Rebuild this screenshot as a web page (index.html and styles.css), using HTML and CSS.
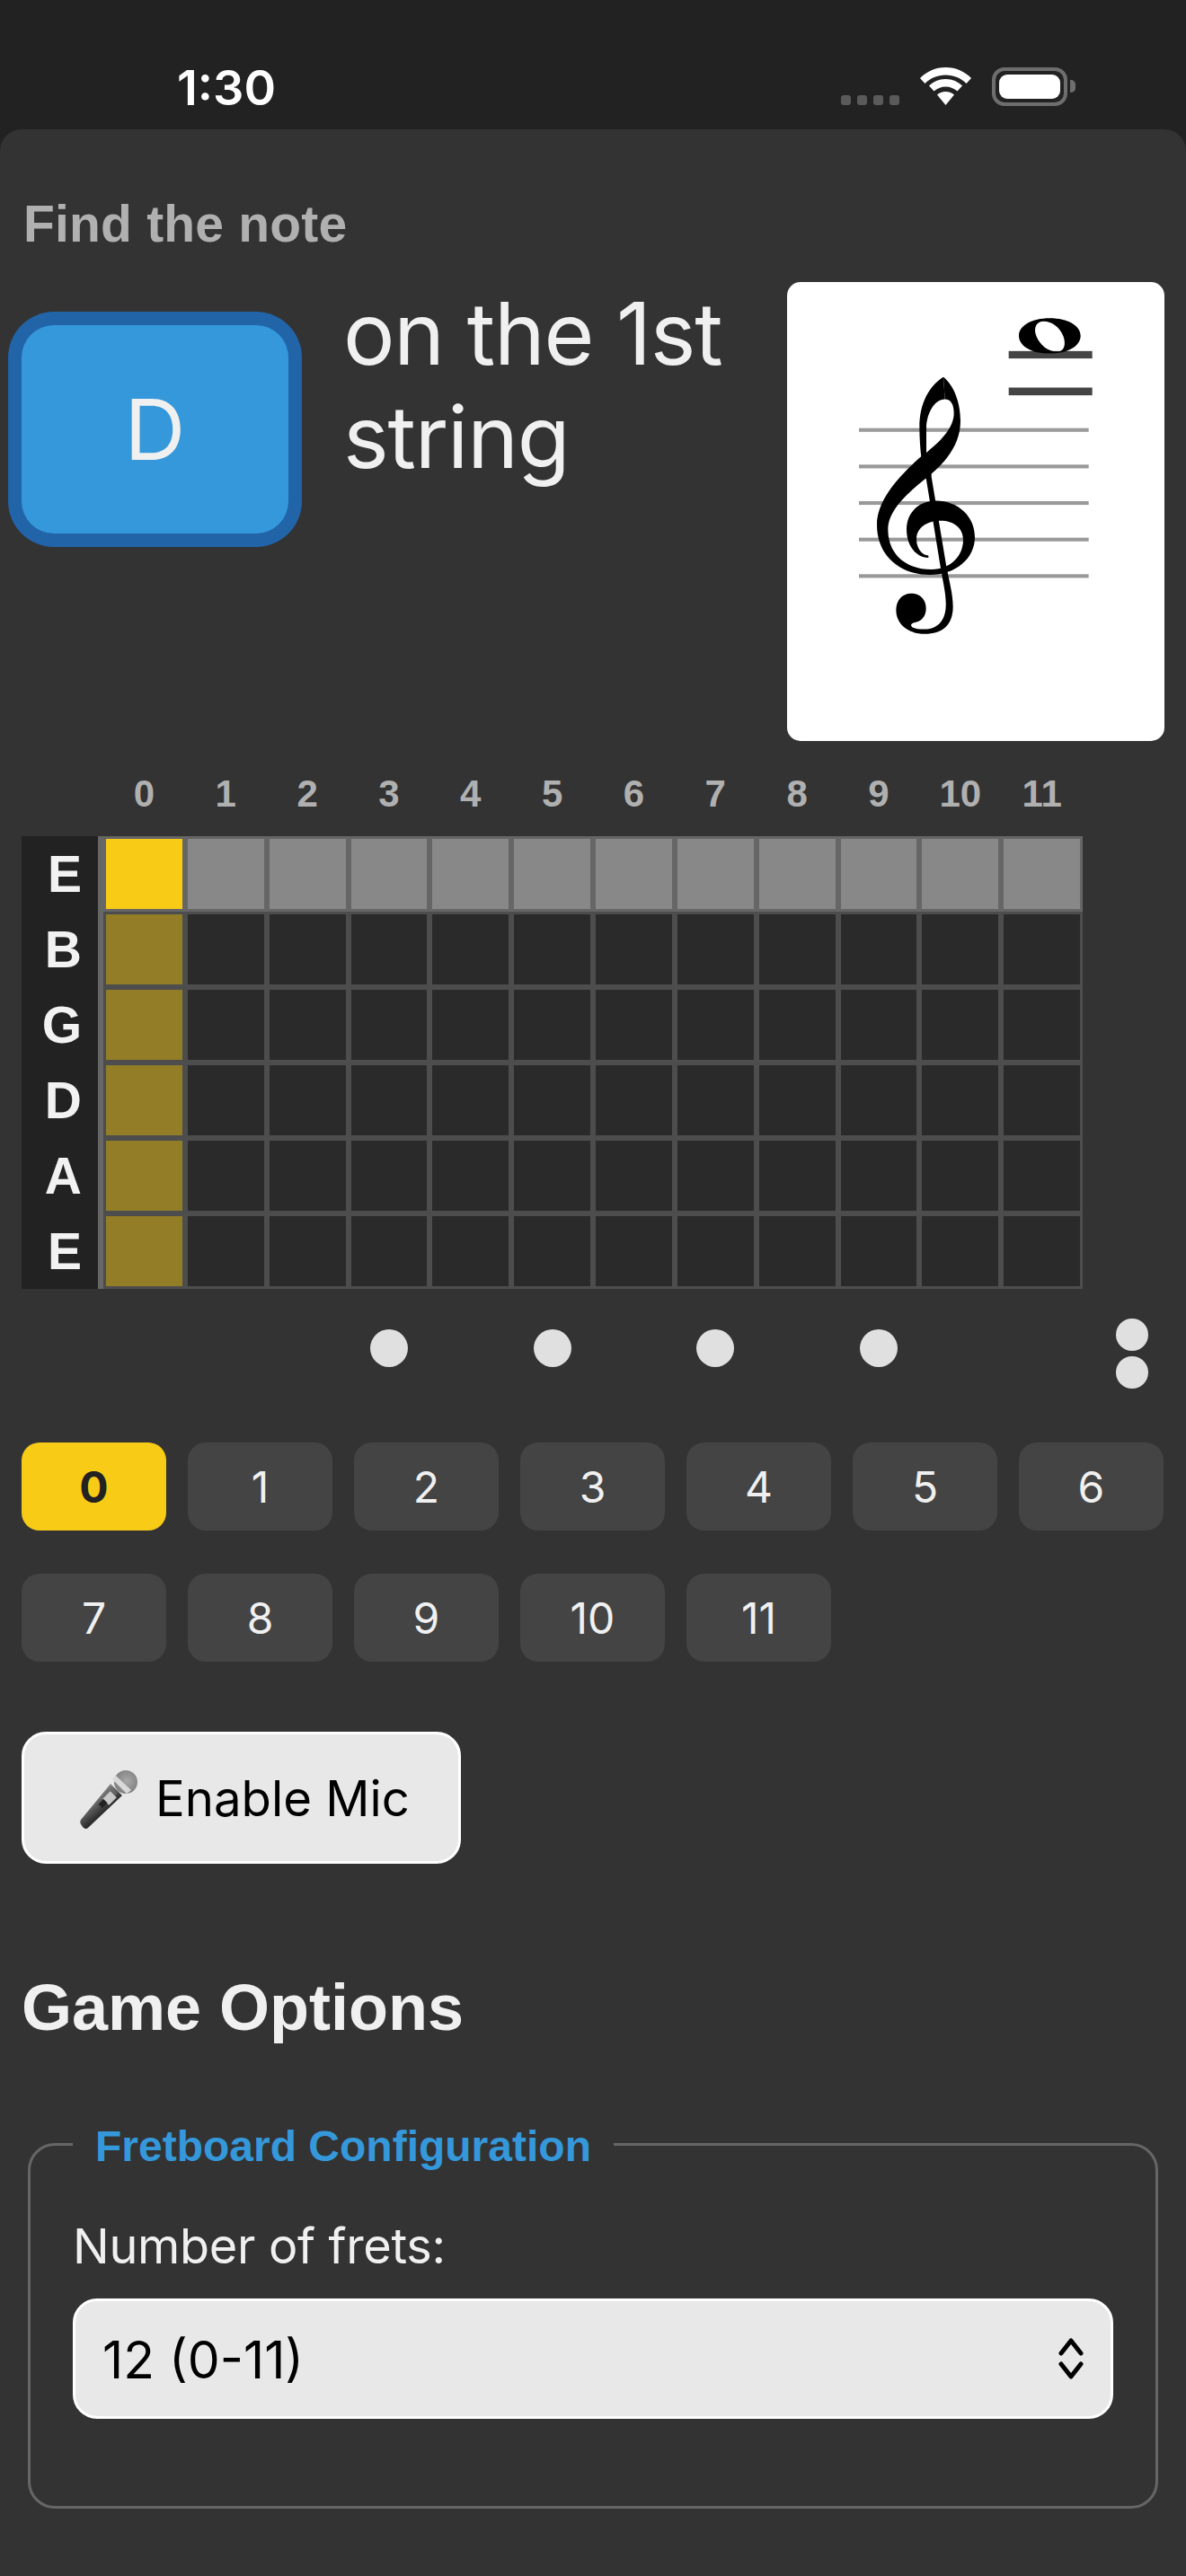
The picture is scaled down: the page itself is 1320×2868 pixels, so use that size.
FILE: index.html
```html
<!DOCTYPE html>
<html>

<head>
    <meta charset="utf-8">
    <title>Find the note</title>
    <link rel="stylesheet" href="styles.css">
</head>

<body>
    <div class="status-bar">
        <span class="time">1:30</span>
        <div class="status-icons">
            <div class="signal"><i></i><i></i><i></i><i></i></div>
            <svg class="wifi" width="57" height="42" viewBox="0 0 57 42">
                <path d="M28.5 0C17 0 7.5 4.5 0 12L5.5 18C11.5 12 19.5 8.5 28.5 8.5C37.5 8.5 45.5 12 51.5 18L57 12C49.5 4.5 40 0 28.5 0Z" />
                <path d="M28.5 13C21 13 14.5 16 10 20.5L15.5 26.5C19 23.5 23.5 21.5 28.5 21.5C33.5 21.5 38 23.5 41.5 26.5L47 20.5C42.5 16 36 13 28.5 13Z" />
                <path d="M28.5 27C24.5 27 21.5 28.5 19 30.5L28.5 42L38 30.5C35.5 28.5 32.5 27 28.5 27Z" />
            </svg>
            <div class="battery"><div class="battery-fill"></div></div>
            <div class="battery-nub"></div>
        </div>
    </div>

    <div class="card">
        <div class="prompt-label">Find the note</div>

        <div class="prompt">
            <div class="note-box">D</div>
            <div class="prompt-text">on the 1st string</div>
            <div class="sheet">
                <svg class="staff" viewBox="48 41 1260 1483" preserveAspectRatio="none">
                    <g fill="#999">
                        <rect x="288" y="513" width="767" height="12" />
                        <rect x="288" y="631" width="767" height="12" />
                        <rect x="288" y="749" width="767" height="12" />
                        <rect x="288" y="867" width="767" height="12" />
                        <rect x="288" y="985" width="767" height="12" />
                    </g>
                    <g fill="#444">
                        <rect x="788" y="264" width="279" height="24" />
                        <rect x="788" y="382" width="279" height="25" />
                    </g>
                    <!-- clef -->
                    <path d="M570 348C605 375 627 430 627 490C627 555 590 612 528 662C470 708 385 770 385 840C385 925 450 970 530 970C595 970 636 925 636 875C636 835 605 812 560 812C515 812 480 835 480 872C480 900 498 925 520 925L520 932C475 930 447 890 447 840C447 785 490 748 545 748C620 748 675 800 675 865C675 935 610 987 525 987C425 987 348 925 348 825C348 745 420 670 497 603L516 590C565 552 605 510 605 465C605 437 595 420 575 420Z" />
                    <path d="M570 348C525 375 490 430 490 510C490 560 495 600 500 640L513 680L560 960C568 1010 580 1050 578 1090C576 1135 550 1163 505 1163C485 1163 465 1160 462 1150C462 1145 470 1142 478 1140C500 1135 512 1118 512 1095C512 1065 490 1047 462 1047C432 1047 412 1070 412 1102C412 1145 450 1178 508 1178C565 1178 602 1150 602 1090C602 1050 590 1010 580 960L530 670L530 640L513 590C513 560 513 540 513 510C515 465 540 420 575 420Z" />
                    <!-- whole note -->
                    <path fill-rule="evenodd" d="M925 158C985 158 1028 182 1028 215C1028 248 985 272 925 272C865 272 822 248 822 215C822 182 865 158 925 158ZM905 168C880 168 870 190 880 215C892 245 920 266 950 266C975 266 980 240 970 215C958 187 932 168 905 168Z" />
                </svg>
            </div>
        </div>

        <div class="fret-numbers">
            <span>0</span><span>1</span><span>2</span><span>3</span><span>4</span><span>5</span>
            <span>6</span><span>7</span><span>8</span><span>9</span><span>10</span><span>11</span>
        </div>

        <div class="fretboard">
            <div class="string-labels">
                <span>E</span><span>B</span><span>G</span><span>D</span><span>A</span><span>E</span>
            </div>
            <div class="frets">
                <div class="cell current"></div>
                <div class="cell target"></div><div class="cell target"></div><div class="cell target"></div>
                <div class="cell target"></div><div class="cell target"></div><div class="cell target"></div>
                <div class="cell target"></div><div class="cell target"></div><div class="cell target"></div>
                <div class="cell target"></div><div class="cell target"></div>

                <div class="cell open"></div>
                <div class="cell"></div><div class="cell"></div><div class="cell"></div><div class="cell"></div><div class="cell"></div>
                <div class="cell"></div><div class="cell"></div><div class="cell"></div><div class="cell"></div><div class="cell"></div><div class="cell"></div>

                <div class="cell open"></div>
                <div class="cell"></div><div class="cell"></div><div class="cell"></div><div class="cell"></div><div class="cell"></div>
                <div class="cell"></div><div class="cell"></div><div class="cell"></div><div class="cell"></div><div class="cell"></div><div class="cell"></div>

                <div class="cell open"></div>
                <div class="cell"></div><div class="cell"></div><div class="cell"></div><div class="cell"></div><div class="cell"></div>
                <div class="cell"></div><div class="cell"></div><div class="cell"></div><div class="cell"></div><div class="cell"></div><div class="cell"></div>

                <div class="cell open"></div>
                <div class="cell"></div><div class="cell"></div><div class="cell"></div><div class="cell"></div><div class="cell"></div>
                <div class="cell"></div><div class="cell"></div><div class="cell"></div><div class="cell"></div><div class="cell"></div><div class="cell"></div>

                <div class="cell open"></div>
                <div class="cell"></div><div class="cell"></div><div class="cell"></div><div class="cell"></div><div class="cell"></div>
                <div class="cell"></div><div class="cell"></div><div class="cell"></div><div class="cell"></div><div class="cell"></div><div class="cell"></div>
            </div>
        </div>

        <div class="inlays">
            <div></div><div></div><div></div>
            <div class="inlay"></div>
            <div></div>
            <div class="inlay"></div>
            <div></div>
            <div class="inlay"></div>
            <div></div>
            <div class="inlay"></div>
            <div></div><div></div>
            <div class="inlay-double"><i></i><i></i></div>
        </div>

        <div class="answers">
            <button class="answer active">0</button>
            <button class="answer">1</button>
            <button class="answer">2</button>
            <button class="answer">3</button>
            <button class="answer">4</button>
            <button class="answer">5</button>
            <button class="answer">6</button>
            <button class="answer">7</button>
            <button class="answer">8</button>
            <button class="answer">9</button>
            <button class="answer">10</button>
            <button class="answer">11</button>
        </div>

        <button class="mic-btn">
            <svg class="mic-icon" width="80" height="80" viewBox="0 0 80 80">
                <defs>
                    <linearGradient id="micBody" x1="24" y1="40" x2="36" y2="54" gradientUnits="userSpaceOnUse">
                        <stop offset="0" stop-color="#8a8a8a" />
                        <stop offset="0.45" stop-color="#5c5c5c" />
                        <stop offset="1" stop-color="#2f2f2f" />
                    </linearGradient>
                    <radialGradient id="micHead" cx="0.55" cy="0.45" r="0.6">
                        <stop offset="0" stop-color="#a8a8a8" />
                        <stop offset="1" stop-color="#7c7c7c" />
                    </radialGradient>
                </defs>
                <path d="M43 24L56 37L18 73C16 75 14 74 12 72L10 69C9 67 9 66 10 64Z" fill="url(#micBody)" />
                <circle cx="60" cy="22" r="13" fill="url(#micHead)" />
                <path d="M45 19L49 15L66 31L61 35Z" fill="#d9d9d9" />
                <path d="M38 33L44 27L51 34L44 43L38 38Z" fill="#6e6e6e" opacity="0.6" />
                <rect x="-5" y="-6" width="10" height="12" transform="translate(42 40) rotate(45)" fill="#c9c9c9" />
                <rect x="-3" y="-4" width="6" height="8" transform="translate(34.5 46) rotate(45)" fill="#222" />
            </svg>
            <span>Enable Mic</span>
        </button>

        <h2 class="options-title">Game Options</h2>

        <fieldset class="options-group">
            <legend>Fretboard Configuration</legend>
            <label class="field-label">Number of frets:</label>
            <div class="select">
                <span>12 (0-11)</span>
                <svg width="32" height="46" viewBox="0 0 32 46" fill="none" stroke="#000" stroke-width="5" stroke-linecap="round" stroke-linejoin="round">
                    <polyline points="5,17 16,3 27,17" />
                    <polyline points="5,29 16,43 27,29" />
                </svg>
            </div>
        </fieldset>
    </div>
</body>

</html>
```

FILE: styles.css
```css
* {
    box-sizing: border-box;
}

body {
    margin: 0;
    height: 2868px;
    overflow: hidden;
    display: flex;
    flex-direction: column;
    background: #222222;
    color: #f0f0f0;
    font-family: "Inter", "Liberation Sans", sans-serif;
}

/* status bar */
.status-bar {
    height: 144px;
    flex: none;
    display: flex;
    justify-content: space-between;
    align-items: flex-start;
    padding: 65px 123px 0 197px;
}

.time {
    font-size: 54px;
    font-weight: 600;
    line-height: 66px;
    color: #fff;
}

.status-icons {
    display: flex;
    align-items: flex-end;
    padding-top: 10px;
    height: 53px;
}

.signal {
    display: flex;
    gap: 7px;
    margin-right: 23px;
    margin-bottom: 1px;
}

.signal i {
    width: 11px;
    height: 11px;
    border-radius: 3px;
    background: #5a5a5a;
}

.wifi {
    fill: #fff;
    margin-right: 23px;
    margin-bottom: 1px;
}

.battery {
    width: 84px;
    height: 43px;
    padding: 4px;
    border: 4px solid #6e6e6e;
    border-radius: 14px;
}

.battery-fill {
    height: 100%;
    background: #fff;
    border-radius: 9px;
}

.battery-nub {
    width: 6px;
    height: 14px;
    margin: 0 0 15px 3px;
    background: #6e6e6e;
    border-radius: 0 5px 5px 0;
}

/* card */
.card {
    flex: 1;
    background: #333333;
    border-radius: 24px 24px 0 0;
    padding: 72px 24px 0;
}

.prompt-label {
    padding-left: 2px;
    font-family: "Liberation Sans", sans-serif;
    font-size: 57px;
    font-weight: 700;
    letter-spacing: 0.2px;
    line-height: 66px;
    color: #b0b0b0;
}

.prompt {
    display: flex;
    align-items: flex-start;
    margin-top: 32px;
}

.note-box {
    width: 297px;
    height: 232px;
    margin-top: 48px;
    display: flex;
    align-items: center;
    justify-content: center;
    flex: none;
    background: #3498db;
    border-radius: 36px;
    box-shadow: 0 0 0 15px #2264a8;
    font-size: 94px;
    font-weight: 400;
}

.prompt-text {
    width: 480px;
    margin: 0 0 0 61px;
    font-size: 96px;
    font-weight: 400;
    letter-spacing: -1.2px;
    line-height: 115px;
}

.sheet {
    width: 420px;
    height: 511px;
    margin-left: auto;
    flex: none;
    background: #fff;
    border-radius: 15px;
}

.staff {
    display: block;
    width: 100%;
    height: 100%;
}

/* fretboard */
.fret-numbers {
    display: grid;
    grid-template-columns: repeat(12, 1fr);
    width: 1090px;
    margin: 34px 0 0 91px;
    height: 48px;
    font-family: "Liberation Sans", sans-serif;
    font-size: 42px;
    font-weight: 700;
    line-height: 50px;
    text-align: center;
    color: #b0b0b0;
}

.fretboard {
    display: flex;
    margin-top: 24px;
}

.string-labels {
    width: 85px;
    flex: none;
    display: flex;
    flex-direction: column;
    background: #222222;
    font-family: "Liberation Sans", sans-serif;
    font-size: 57px;
    font-weight: 700;
    color: #f2f2f2;
}

.string-labels span {
    height: 84px;
    line-height: 84px;
    text-align: right;
    padding-right: 18px;
}

.frets {
    width: 1096px;
    display: grid;
    grid-template-columns: repeat(12, 1fr);
    grid-auto-rows: 84px;
    border-left: 6px solid #666666;
}

.cell {
    border: 3px solid #4d4d4d;
    background: #2a2a2a;
}

.cell.open {
    background: #937d27;
}

.cell.target {
    border-color: #666666;
    background: #888888;
}

.cell.current {
    border-color: #666666;
    background: #f8cb17;
}

.inlays {
    display: grid;
    grid-template-columns: repeat(13, 90.83px);
    margin: 33px 0 0 91px;
    height: 78px;
}

.inlay {
    width: 42px;
    height: 42px;
    margin-top: 12px;
    justify-self: center;
    border-radius: 50%;
    background: #e0e0e0;
}

.inlay-double {
    display: flex;
    flex-direction: column;
    gap: 6px;
    justify-self: center;
    margin-left: 20px;
}

.inlay-double i {
    width: 36px;
    height: 36px;
    border-radius: 50%;
    background: #e0e0e0;
}

/* answer buttons */
.answers {
    display: flex;
    flex-wrap: wrap;
    gap: 48px 24px;
    margin-top: 60px;
}

.answer {
    width: 161px;
    height: 98px;
    padding: 0;
    border: 0;
    border-radius: 20px;
    background: #444444;
    color: #f0f0f0;
    font-family: "Inter", sans-serif;
    font-size: 48px;
    font-weight: 400;
}

.answer.active {
    background: #f8cb17;
    color: #222222;
    font-weight: 700;
}

.mic-btn {
    display: flex;
    align-items: center;
    width: 489px;
    height: 147px;
    margin-top: 78px;
    padding: 0 0 0 62px;
    border: 3px solid #fff;
    border-radius: 27px;
    background: #e8e8e8;
    color: #000;
    font-family: "Inter", sans-serif;
    font-size: 54.5px;
    font-weight: 400;
}

.mic-icon {
    margin: 0 13px 0 -9px;
    flex: none;
}

.options-title {
    margin: 118px 0 0;
    font-family: "Liberation Sans", sans-serif;
    font-size: 72px;
    font-weight: 700;
    line-height: 84px;
}

.options-group {
    margin: 81px 7px 0;
    padding: 51px 47px 0;
    height: 435px;
    border: 3px solid #666666;
    border-radius: 30px;
    min-width: 0;
}

.options-group legend {
    margin-left: 0;
    padding: 4px 25px 0;
    font-family: "Liberation Sans", sans-serif;
    font-size: 48px;
    font-weight: 700;
    color: #3498db;
}

.field-label {
    display: block;
    font-size: 54px;
    font-weight: 400;
    letter-spacing: -0.3px;
    line-height: 66px;
}

.select {
    display: flex;
    align-items: center;
    justify-content: space-between;
    height: 134px;
    margin-top: 25px;
    padding: 0 28px 0 30px;
    border: 3px solid #fff;
    border-radius: 27px;
    background: #e8e8e8;
    color: #000;
    font-size: 57px;
}

.select span {
    padding-top: 2px;
}
```
